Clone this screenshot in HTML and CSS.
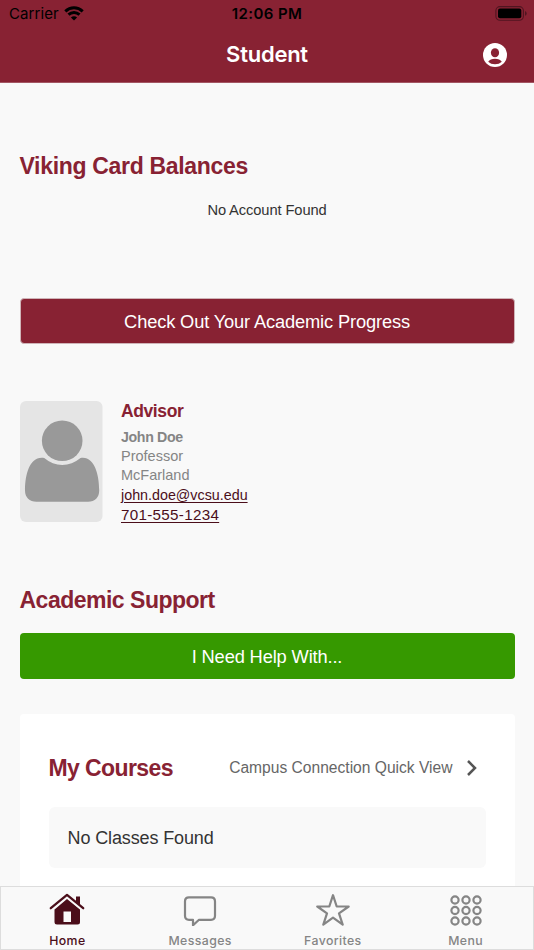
FILE: index.html
```
<!DOCTYPE html>
<html lang="en">
<head>
<meta charset="utf-8">
<title>Student</title>
<link rel="stylesheet" href="styles.css">
</head>
<body>
<div class="app">
  <header class="header">
    <div class="status">
      <div class="carrier"><span>Carrier</span>
        <svg width="20" height="15" viewBox="0 0 20 15" fill="none" stroke="#000" stroke-width="3"><path d="M1.300 5.300C6.300.7 13.700.7 18.700 5.300M4.500 8.700c3.100-2.900 7.900-2.900 11 0"/><path d="M10 14.600 6.900 11.400c1.800-1.600 4.400-1.600 6.200 0z" fill="#000" stroke="none"/></svg>
      </div>
      <div class="time">12:06 PM</div>
      <svg class="battery" width="32" height="15" viewBox="0 0 32 15"><rect x=".9" y=".6" width="27.5" height="13.6" rx="4" fill="none" stroke="#501520" stroke-width="1.1"/><rect x="3" y="2.6" width="23.3" height="9.6" rx="2" fill="#000"/><path d="M30 5v4.8q1.7-.6 1.7-2.4T30 5z" fill="#501520"/></svg>
    </div>
    <div class="navbar">
      <h1 class="title">Student</h1>
      <svg class="account" width="24" height="24" viewBox="0 0 24 24"><circle cx="12" cy="12" r="12" fill="#fff"/><ellipse cx="12" cy="9.700" rx="4.100" ry="4.500" fill="#882233"/><path d="M5.200 18.800c1.200-2 3.700-3 6.800-3s5.600 1 6.800 3c-1.800 1.700-4.100 2.500-6.800 2.500s-5-.8-6.800-2.500z" fill="#882233"/></svg>
    </div>
  </header>
  <main class="content">
    <h2 class="heading">Viking Card Balances</h2>
    <p class="empty">No Account Found</p>
    <a class="button progress">Check Out Your Academic Progress</a>
    <section class="advisor">
      <svg width="83" height="121" viewBox="0 0 83 121"><rect width="82.500" height="121" rx="6" fill="#e5e5e5"/><circle cx="42.200" cy="39.800" r="20.300" fill="#999"/><path d="M24.200 57C10 54.500 5 73 5 89.500c0 7 4.500 11.200 11.500 11.200H68c7 0 11.200-4.200 11.200-11.200C79.200 73 74 54.500 60.500 57 49.500 66.300 35 66.300 24.200 57z" fill="#999"/></svg>
      <div class="details">
        <h3 class="role">Advisor</h3>
        <strong class="name">John Doe</strong>
        <span>Professor</span>
        <span>McFarland</span>
        <a class="link">john.doe@vcsu.edu</a>
        <a class="link phone">701-555-1234</a>
      </div>
    </section>
    <h2 class="heading support">Academic Support</h2>
    <a class="button help">I Need Help With...</a>
    <section class="courses">
      <div class="courses-top">
        <h2 class="heading">My Courses</h2>
        <a class="quick"><span>Campus Connection Quick View</span>
          <svg width="10" height="16" viewBox="0 0 10 16" fill="none" stroke="#555" stroke-width="2.500"><path d="M1 1l7 7-7 7"/></svg>
        </a>
      </div>
      <div class="classes">No Classes Found</div>
    </section>
  </main>
  <nav class="tabs">
    <a class="tab active">
      <svg width="36" height="33" viewBox="0 0 36 33"><path d="M5.500 16.500 18 6l13 10.500V29q0 2.500-2.500 2.500H8Q5.500 31.500 5.500 29z" fill="#4b0e1a"/><path d="M1.800 15.500 18 2l16.200 13.500" fill="none" stroke="#f9f9f9" stroke-width="5"/><path d="M27 3.500h4V12l-4-3.300z" fill="#4b0e1a"/><path d="M1.800 15.200 18 1.900l16.200 13.300" fill="none" stroke="#4b0e1a" stroke-width="2.300" stroke-linecap="round" stroke-linejoin="round"/><path d="M14.500 18.500h7.500V29h-7.500z" fill="#f9f9f9"/></svg>
      <span>Home</span>
    </a>
    <a class="tab">
      <svg width="36" height="33" viewBox="0 0 36 33" fill="none" stroke="#858585" stroke-width="2.200" stroke-linejoin="round"><path d="M7 4.400h22q4 0 4 4v14.400q0 4-4 4H17L11 32.300v-5.500H7q-4 0-4-4V8.400q0-4 4-4z"/></svg>
      <span>Messages</span>
    </a>
    <a class="tab">
      <svg width="36" height="33" viewBox="0 0 36 33" fill="none" stroke="#858585" stroke-width="2.200" stroke-linejoin="round"><path d="M18 2.200l3.700 11.300h12L24 20.400l3.700 11.300L18 24.700 8.300 31.700 12 20.400l-9.700-6.900h12z"/></svg>
      <span>Favorites</span>
    </a>
    <a class="tab">
      <svg width="36" height="33" viewBox="0 0 36 33" fill="none" stroke="#858585" stroke-width="2.200"><circle cx="7" cy="7" r="3.600"/><circle cx="18" cy="7" r="3.600"/><circle cx="29" cy="7" r="3.600"/><circle cx="7" cy="17.500" r="3.600"/><circle cx="18" cy="17.500" r="3.600"/><circle cx="29" cy="17.500" r="3.600"/><circle cx="7" cy="28" r="3.600"/><circle cx="18" cy="28" r="3.600"/><circle cx="29" cy="28" r="3.600"/></svg>
      <span>Menu</span>
    </a>
  </nav>
</div>
</body>
</html>
```
FILE: styles.css
```
* { box-sizing: border-box; }
body, h1, h2, h3, p { margin: 0; }
body { font-family: "Liberation Sans", Arial, sans-serif; background: #f9f9f9; color: #333; }
svg { display: block; flex: none; }
.app { display: flex; flex-direction: column; height: 950px; overflow: hidden; }
.header { flex: none; height: 83px; background: #882233; border-bottom: 1px solid #a35663; font-family: Inter, sans-serif; }
.status { display: grid; grid-template-columns: 1fr auto 1fr; align-items: center; height: 27px; padding: 0 7px 0 9px; color: #000; }
.carrier { display: flex; align-items: center; gap: 5px; font-size: 15px; letter-spacing: .1px; }
.carrier svg { margin-top: -1px; }
.time { margin-left: -2px; font-size: 15px; font-weight: 600; letter-spacing: .4px; }
.battery { justify-self: end; }
.navbar { display: grid; grid-template-columns: 1fr auto 1fr; align-items: center; height: 55px; padding-right: 27px; }
.title { grid-column: 2; margin: -2px 0 0 27px; color: #fff; font-size: 22px; font-weight: 600; letter-spacing: -.25px; }
.account { justify-self: end; }
.content { flex: 1; min-height: 0; overflow: hidden; padding: 68px 19.5px 0; }
.heading { color: #882233; font-size: 23px; line-height: 30px; font-weight: 700; letter-spacing: -.32px; }
.support { letter-spacing: -.5px; }
.empty { margin-top: 20px; text-align: center; font-size: 14.7px; line-height: 18px; letter-spacing: -.1px; }
.button { display: block; height: 46px; border-radius: 4px; color: #fff; text-align: center; font-size: 18.3px; line-height: 48px; letter-spacing: -.15px; }
.progress { margin-top: 79px; border: 1px solid #cfb4b8; background: #882233; line-height: 45px; }
.advisor { display: flex; gap: 18.5px; margin: 57px 0 63px; height: 121px; }
.details { display: flex; flex-direction: column; align-items: flex-start; font-size: 14.5px; line-height: 19.4px; color: #858585; }
.role { color: #882233; font-size: 17.5px; line-height: 21px; margin-bottom: 5.5px; letter-spacing: -.4px; }
.name { font-size: 14.2px; letter-spacing: -.35px; }
.link { color: #4b0e1a; text-decoration: underline; text-underline-offset: 2px; text-decoration-thickness: 1px; font-size: 14.3px; }
.phone { font-size: 15.2px; letter-spacing: .3px; }
.help { margin-top: 18px; background: #369900; }
.courses { margin-top: 35px; padding: 39px 29px 0; height: 200px; background: #fff; border-radius: 4px; }
.courses-top { display: flex; justify-content: space-between; align-items: center; height: 30px; padding-right: 9px; }
.courses .heading { letter-spacing: -.6px; }
.quick { display: flex; align-items: center; gap: 14px; font-size: 15.6px; color: #666; }
.classes { margin-top: 24px; height: 61px; padding-left: 19px; border-radius: 6px; background: #f9f9f9; font-size: 18px; letter-spacing: -.12px; line-height: 62px; }
.tabs { flex: none; display: grid; grid-template-columns: repeat(4, 1fr); height: 64px; padding-right: 1px; border: 1px solid #ddd; background: #f9f9f9; font-family: Inter, sans-serif; }
.tab { display: flex; flex-direction: column; align-items: center; padding-top: 6px; color: #858585; font-size: 12.3px; line-height: 15px; font-weight: 500; letter-spacing: .4px; }
.tab span { margin-top: 7px; }
.active { color: #4b0e1a; }
```
